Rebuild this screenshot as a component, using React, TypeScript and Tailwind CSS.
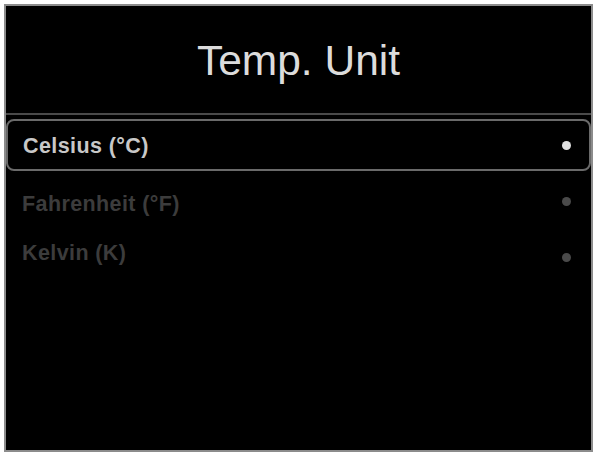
import React from "react";

const font = { fontFamily: '"Liberation Sans", Arial, sans-serif' };

export default function App() {
  return (
    <div className="w-[598px] h-[453px] bg-white pl-[4px] pt-[4px]" style={font}>
      <div className="w-[589px] h-[448px] bg-black border-2 border-[#8c8c8c] flex flex-col">
        <div className="h-[109px] flex items-center justify-center border-b-2 border-[#4a4a4a]">
          <span className="text-[42.5px] leading-none text-[#dcdcdc] mt-[3px]">Temp. Unit</span>
        </div>
        <div className="mt-[4px] h-[52px] border-2 border-[#6a6a6a] rounded-[8px] flex items-center justify-between pl-[15px] pr-[18px]">
          <span className="text-[21.5px] font-bold tracking-[0.4px] text-[#c8c8c8] mt-[3px]">Celsius (°C)</span>
          <span className="w-[9px] h-[9px] rounded-full bg-[#e0e0e0] mt-[1px]" />
        </div>
        <div className="h-[56px] flex items-center justify-between pl-[16px] pr-[20px]">
          <span className="text-[21.5px] font-bold tracking-[0.4px] text-[#3c3c3c] mt-[10px]">Fahrenheit (°F)</span>
          <span className="w-[9px] h-[9px] rounded-full bg-[#4a4a4a] mt-[4px]" />
        </div>
        <div className="h-[50px] flex items-center justify-between pl-[16px] pr-[20px]">
          <span className="text-[21.5px] font-bold tracking-[0.4px] text-[#3c3c3c] mt-[2px]">Kelvin (K)</span>
          <span className="w-[9px] h-[9px] rounded-full bg-[#4a4a4a] mt-[10px]" />
        </div>
      </div>
    </div>
  );
}
